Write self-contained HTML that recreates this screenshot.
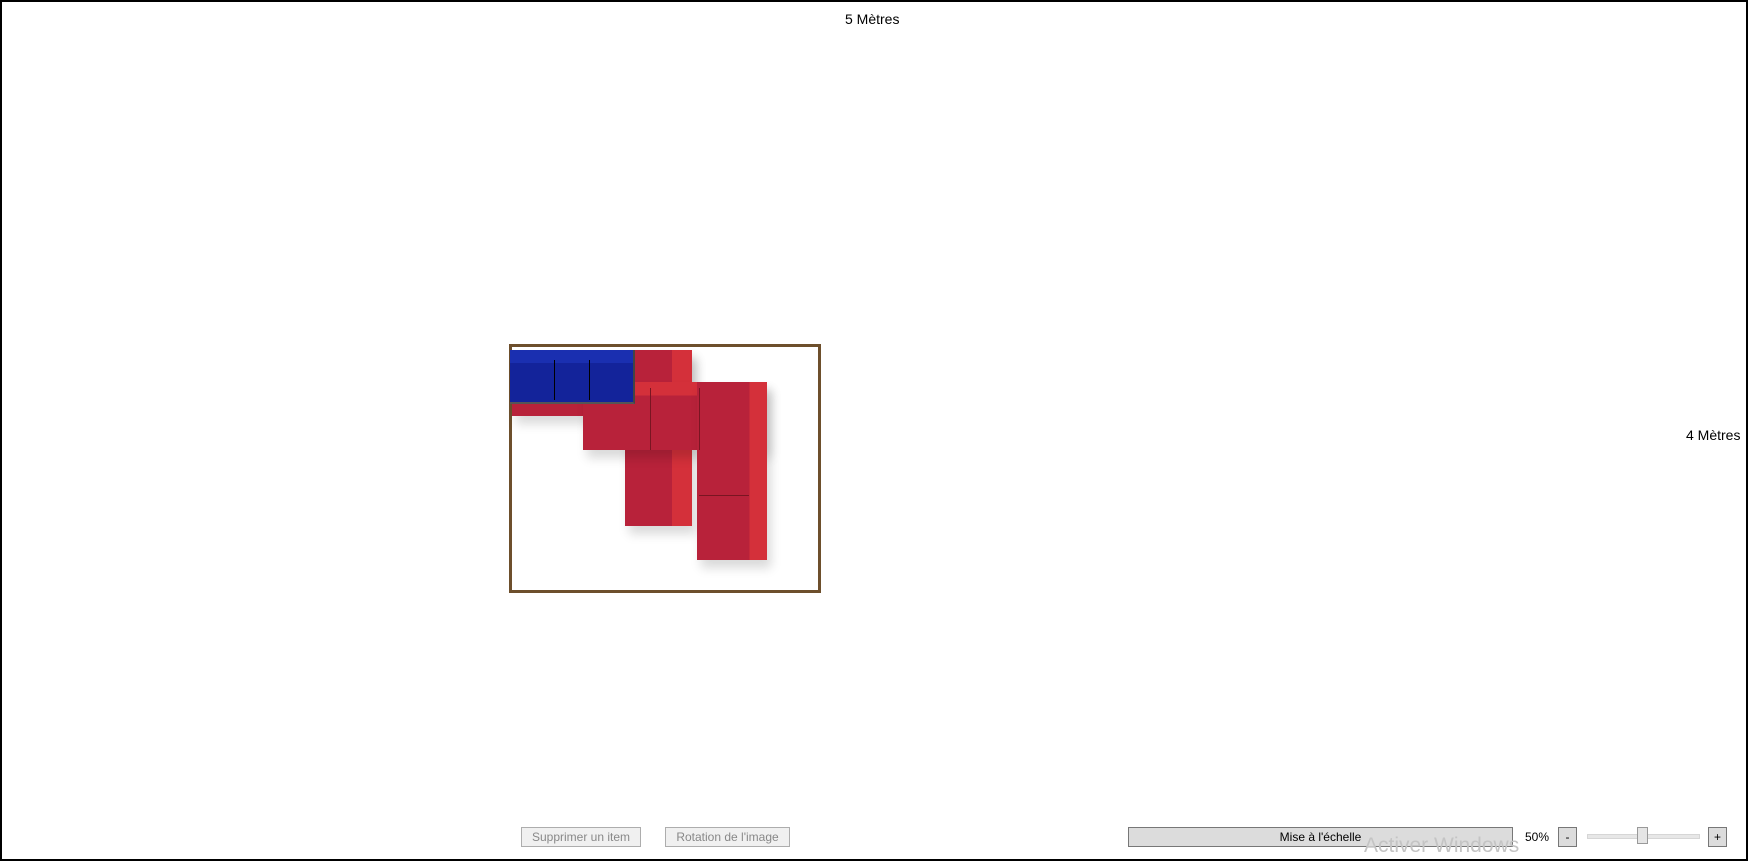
<!DOCTYPE html>
<html><head><meta charset="utf-8"><style>
body{margin:0;width:1748px;height:861px;background:#fff;font-family:"Liberation Sans",sans-serif;position:relative;overflow:hidden}
.f{position:absolute;left:0;top:0;width:1744px;height:857px;border:2px solid #000}
.a{position:absolute}
.t{position:absolute;font-size:14px;color:#000}
.btn{position:absolute;border:1px solid #adadad;background:#f0f0f0;color:#888;font-size:12px;text-align:center;line-height:18px;box-sizing:border-box}
</style></head><body>
<div class="f"></div>
<div class="t" style="left:845px;top:11px">5 Mètres</div>
<div class="t" style="left:1686px;top:427px">4 Mètres</div>
<div class="a" style="left:509px;top:344px;width:306px;height:243px;border:3px solid #6d4f2c;background:#fff"></div>
<!-- back sofa -->
<div class="a" style="left:512px;top:350px;width:180px;height:66px;background:linear-gradient(#d4303a 0 22%,#b8223a 22%);box-shadow:4px 8px 10px rgba(0,0,0,.15)"></div>
<div class="a" style="left:625px;top:350px;width:67px;height:176px;background:linear-gradient(90deg,#b8223a 0 70%,#d4303a 70%);box-shadow:4px 8px 10px rgba(0,0,0,.15)"></div>
<!-- front sofa -->
<div class="a" style="left:583px;top:382px;width:184px;height:68px;background:linear-gradient(#d4303a 0 20%,#b8223a 20%);box-shadow:4px 8px 10px rgba(0,0,0,.15)"></div>
<div class="a" style="left:697px;top:382px;width:70px;height:178px;background:linear-gradient(90deg,#b8223a 0 75%,#d4303a 75%);box-shadow:4px 8px 10px rgba(0,0,0,.15)"></div>
<div class="a" style="left:650px;top:388px;width:1px;height:62px;background:#7a1522"></div>
<div class="a" style="left:699px;top:388px;width:1px;height:62px;background:#7a1522"></div>
<div class="a" style="left:699px;top:495px;width:50px;height:1px;background:#7a1522"></div>
<!-- blue sofa -->
<div class="a" style="left:510px;top:350px;width:123px;height:52px;background:linear-gradient(#1a2fb0 0 25%,#13239a 25%);border-bottom:2px solid #555;border-right:2px solid #444"></div>
<div class="a" style="left:554px;top:360px;width:1px;height:40px;background:#000"></div>
<div class="a" style="left:589px;top:360px;width:1px;height:40px;background:#000"></div>
<div class="btn" style="left:521px;top:827px;width:120px;height:20px">Supprimer un item</div>
<div class="btn" style="left:665px;top:827px;width:125px;height:20px">Rotation de l'image</div>
<div class="btn" style="left:1128px;top:827px;width:385px;height:20px;background:#dcdcdc;color:#000;border-color:#777">Mise à l'échelle</div>
<div class="a" style="left:1364px;top:834px;font-size:21px;color:#c4c4c4">Activer Windows</div>
<div class="t" style="left:1525px;top:830px;font-size:12px">50%</div>
<div class="btn" style="left:1558px;top:827px;width:19px;height:20px;color:#000;border-color:#777;background:#dcdcdc">-</div>
<div class="a" style="left:1587px;top:834px;width:111px;height:3px;background:#e7e7e7;border:1px solid #d6d6d6"></div>
<div class="a" style="left:1637px;top:827px;width:9px;height:15px;background:#e5e5e5;border:1px solid #999"></div>
<div class="btn" style="left:1708px;top:827px;width:19px;height:20px;color:#000;border-color:#777;background:#dcdcdc">+</div>
</body></html>
